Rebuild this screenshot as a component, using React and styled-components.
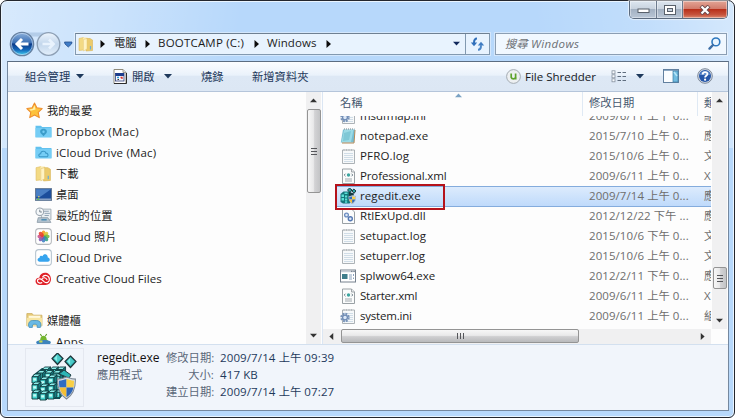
import React from 'react';
import styled, { createGlobalStyle } from 'styled-components';

const GlobalStyle = createGlobalStyle`
    * {
        box-sizing: border-box;
    }

    body {
        margin: 0;
        overflow: hidden;
        background: #fff;
        font-family: "Open Sans", "Noto Sans CJK TC", sans-serif;
        font-size: 11.5px;
        color: #1c1c1c;
    }

    svg {
        display: block;
        flex: none;
    }
`;

const Frame = styled.div`
    width: 735px;
    height: 418px;
    display: flex;
    flex-direction: column;
    padding: 0 6px 6px;
    border: 1px solid #24272e;
    border-radius: 7px 7px 6px 6px;
    box-shadow: inset 0 0 0 1px #eaf5ff;
    background:
        linear-gradient(100deg, rgba(255,255,255,.45) 0, rgba(255,255,255,.28) 110px, rgba(255,255,255,0) 240px) 0 0 / 100% 147px no-repeat,
        linear-gradient(260deg, rgba(255,255,255,.42) 0, rgba(255,255,255,.15) 90px, rgba(255,255,255,0) 200px) 0 0 / 100% 147px no-repeat,
        #b7d8fb;
`;

const TitleBar = styled.div`
    height: 32px;
    display: flex;
    justify-content: flex-end;
    align-items: flex-start;
`;

const WindowButtons = styled.div`
    display: flex;
    height: 18px;
    border: 1px solid #5c6b7e;
    border-top: 0;
    border-radius: 0 0 5px 5px;
    overflow: hidden;
    box-shadow: 0 0 1px 1px rgba(255,255,255,.55);
`;

const WindowButton = styled.span`
    width: ${p => p.$width}px;
    display: flex;
    align-items: center;
    justify-content: center;
    border-left: ${p => p.$first ? '0' : '1px solid #6d7b8e'};
    box-shadow: inset 0 0 0 1px rgba(255,255,255,.4);
    background: ${p => p.$close
        ? 'linear-gradient(#e3a596 0, #d27c6c 45%, #b8301a 50%, #c6533c 80%, #dc8a70 100%)'
        : 'linear-gradient(#dde6f0 0, #c9d3df 45%, #a3b1c2 50%, #b9c6d6 100%)'};
`;

const NavBar = styled.div`
    height: 22px;
    display: flex;
    align-items: center;
`;

const NavButtons = styled.div`
    width: 68px;
    padding-left: 2px;
    flex: none;
`;

const Address = styled.div`
    width: 415px;
    height: 22px;
    display: flex;
    align-items: center;
    padding-left: 2px;
    border: 1px solid #8299b0;
    border-top-color: #6e8092;
    background: #e8f3fe;
    box-shadow: 0 0 0 1px rgba(255,255,255,.4);
`;

const Crumb = styled.span`
    width: ${p => p.$width}px;
    flex: none;
    margin-top: -2px;
    white-space: nowrap;
    letter-spacing: ${p => p.$spacing || 0}px;
`;

const CrumbArrow = styled.span`
    width: ${p => p.$width}px;
    flex: none;
`;

const AddressDrop = styled.span`
    margin-left: auto;
    width: 18px;
    display: flex;
    justify-content: center;
`;

const Refresh = styled.span`
    width: 24px;
    height: 20px;
    display: flex;
    align-items: center;
    justify-content: center;
    border-left: 1px solid #8299b0;
`;

const Search = styled.div`
    margin-left: 5px;
    width: 232px;
    height: 22px;
    padding: 0 5px 0 9px;
    display: flex;
    align-items: center;
    justify-content: space-between;
    border: 1px solid #8b9eb3;
    background: #f1f8ff;
    box-shadow: 0 0 0 1px rgba(255,255,255,.4);
    color: #6c7075;
    font-style: italic;
    letter-spacing: .4px;
`;

const Client = styled.div`
    margin-top: 6px;
    height: 351px;
    width: 722px;
    display: flex;
    flex-direction: column;
    border: 1px solid #75889f;
    border-top-color: #5b6d82;
    background: #fdfdfd;
`;

const Toolbar = styled.div`
    height: 30px;
    flex: none;
    display: flex;
    align-items: center;
    border-bottom: 1px solid #b5c5da;
    background: linear-gradient(#fbfdff 0, #eaf2fb 45%, #dde8f5 50%, #dce7f4 100%);
    color: #1e395b;
`;

const Tool = styled.span`
    width: ${p => p.$width}px;
    margin-left: ${p => p.$start ? 17 : 0}px;
    flex: none;
    display: flex;
    align-items: center;
    white-space: nowrap;
    color: ${p => p.$dark ? '#16181c' : '#1e395b'};
`;

const Body = styled.div`
    height: 252px;
    flex: none;
    display: flex;
`;

const Sidebar = styled.div`
    width: 298px;
    padding-top: 8px;
    overflow: hidden;
`;

const SideItem = styled.div`
    height: 21px;
    margin-bottom: ${p => p.$gap ? 21 : 0}px;
    padding-left: ${p => p.$root ? 18 : 27}px;
    display: flex;
    align-items: center;
    gap: ${p => p.$root ? 4 : 4}px;
    white-space: nowrap;

    svg {
        width: 17px;
        height: 17px;
    }
`;

const SideLabel = styled.span`
    letter-spacing: ${p => p.$spacing || 0}px;
`;

const Cjk = styled.span`
    font-family: "Noto Sans CJK TC", sans-serif;
    font-size: 11.3px;
    line-height: 14px;
    letter-spacing: 0;
`;

const VScroll = styled.div`
    width: 15px;
    flex: none;
    display: flex;
    flex-direction: column;
    align-items: center;
    background: #f0f0f1;
`;

const ScrollEnd = styled.span`
    width: 17px;
    height: 17px;
    flex: none;
    display: flex;
    align-items: center;
    justify-content: center;
`;

const VThumb = styled.span`
    width: 14px;
    height: ${p => p.$height}px;
    margin-top: ${p => p.$offset}px;
    display: flex;
    align-items: center;
    justify-content: center;
    border: 1px solid #949494;
    border-radius: 2px;
    background: linear-gradient(90deg, #f7f7f7 0, #e9e9ea 45%, #d3d3d5 55%, #c3c4c6 100%);
`;

const HScroll = styled.div`
    height: 15px;
    width: 388px;
    flex: none;
    display: flex;
    align-items: center;
    background: #f0f0f1;
`;

const HThumb = styled.span`
    width: 238px;
    height: 14px;
    margin-left: 1px;
    display: flex;
    align-items: center;
    justify-content: center;
    border: 1px solid #949494;
    border-radius: 2px;
    background: linear-gradient(#f7f7f7 0, #e9e9ea 45%, #cfcfd1 55%, #b9babc 100%);
`;

const Spacer = styled.span`
    flex: 1;
`;

const Main = styled.div`
    flex: 1;
    margin-left: 1px;
    display: flex;
    flex-direction: column;
    border-left: 1px solid #dbe6f3;
`;

const MainTop = styled.div`
    height: 237px;
    display: flex;
`;

const List = styled.div`
    width: 388px;
    margin-right: 1px;
    overflow: hidden;
    position: relative;
`;

const ListHeader = styled.div`
    height: 24px;
    display: grid;
    grid-template-columns: 259px 115px 14px;
    color: #45576e;
    line-height: 22px;
`;

const HeaderCell = styled.span`
    padding-left: ${p => p.$first ? 17 : 6}px;
    overflow: hidden;
    white-space: nowrap;
    border-left: ${p => p.$first ? '0' : '1px solid #dfe9f4'};
`;

const SortMark = styled.span`
    position: absolute;
    left: 132px;
    top: 0;
`;

const Rows = styled.div`
    height: 213px;
    overflow: hidden;

    > :first-child {
        margin-top: -10px;
    }
`;

const Row = styled.div`
    height: 20px;
    display: grid;
    grid-template-columns: 247px 115px 13px;
    align-items: center;
    margin-left: 13px;
    box-shadow: ${p => p.$selected ? 'inset 0 1px #84acdd, 0 1px #84acdd' : 'none'};
    background: ${p => p.$selected ? 'linear-gradient(#deecfd, #bfdafb)' : 'none'};
`;

const FileName = styled.span`
    display: flex;
    align-items: center;
    gap: 4px;
    padding-left: 4px;
    white-space: nowrap;
    letter-spacing: ${p => p.$spacing || 0}px;

    svg {
        width: 16px;
        height: 16px;
    }
`;

const DateText = styled.span`
    padding-left: 6px;
    color: #6d6d6d;
    white-space: nowrap;
    letter-spacing: .07px;
`;

const TypeText = styled.span`
    padding-left: 6px;
    width: 13px;
    overflow: hidden;
    color: #6d6d6d;
    white-space: nowrap;
`;

const Highlight = styled.span`
    position: absolute;
    left: 12px;
    top: 92px;
    width: 110px;
    height: 26px;
    border: 2px solid #b5121b;
`;

const Details = styled.div`
    flex: 1;
    display: flex;
    border-top: 1px solid #d3e0ef;
    background: #f1f5fb;
    line-height: 17px;
`;

const Preview = styled.div`
    width: 59px;
    height: 59px;
    margin: 3px 0 0 17px;
    display: flex;
    align-items: center;
    justify-content: center;
    border: 1px solid #e4e8f0;
`;

const DetailName = styled.div`
    margin: 4px 0 0 13px;
    width: 69px;
    white-space: nowrap;
    color: #5a6779;

    b {
        display: block;
        font-weight: 400;
        font-size: 12px;
        color: #111;
    }
`;

const DetailGrid = styled.div`
    margin-top: 4px;
    display: grid;
    grid-template-columns: 48px auto;
    grid-template-rows: repeat(3, 17px);
    column-gap: 6px;
    color: #1e395b;
    white-space: nowrap;
    align-content: start;
    letter-spacing: .12px;
`;

const DetailKey = styled.span`
    text-align: right;
    color: #5a6779;
`;

// Chinese runs are set a little smaller than the Latin ones
const Mixed = ({ children }) => children
    .split(/([\u4e00-\u9fff]+)/)
    .map((part, i) => i % 2 ? <Cjk key={i}>{part}</Cjk> : part);

const Triangle = ({ dir = 'down', size = 7, color = '#1e395b' }) => {
    const turn = { down: 0, left: 90, up: 180, right: 270 }[dir];
    return (
        <svg width={size} height={size} viewBox="0 0 8 8">
            <path d="M0 2h8L4 6.4z" fill={color} transform={`rotate(${turn} 4 4)`} />
        </svg>
    );
};

const CrumbTriangle = () => (
    <svg width="6" height="8" viewBox="0 0 6 8">
        <path d="M.5 0l4.500 4L.5 8z" fill="#0c0c0c" />
    </svg>
);

const Grip = ({ vertical }) => (
    <svg width="8" height="8" viewBox="0 0 8 8">
        <path d={vertical ? 'M1 1.5h6M1 4.5h6M1 7.5h6' : 'M1.5 1v6M4.5 1v6M7.5 1v6'} stroke="#55565a" />
    </svg>
);

const BackForward = () => (
    <svg width="66" height="26" viewBox="0 0 66 26">
        <defs>
            <linearGradient id="back" x1="0" y1="0" x2="0" y2="1">
                <stop offset="0" stopColor="#8fb2dc" />
                <stop offset=".45" stopColor="#3a6fb4" />
                <stop offset=".5" stopColor="#0c3b88" />
                <stop offset=".75" stopColor="#1467b9" />
                <stop offset="1" stopColor="#48dcf7" />
            </linearGradient>
            <linearGradient id="forward" x1="0" y1="0" x2="0" y2="1">
                <stop offset="0" stopColor="#edf5fd" />
                <stop offset=".5" stopColor="#c3d7ec" />
                <stop offset="1" stopColor="#e3effb" />
            </linearGradient>
        </defs>
        <path d="M13 1.5h27l-3 4H18z" fill="#a6c2df" opacity=".7" />
        <circle cx="13" cy="13" r="11.7" fill="url(#back)" stroke="#68819f" strokeWidth="1.2" />
        <circle cx="13" cy="13" r="10.6" fill="none" stroke="#c2d8ef" strokeWidth=".9" opacity=".8" />
        <path d="M19.5 13H9M13 8l-5 5 5 5" fill="none" stroke="#fff" strokeWidth="3" />
        <circle cx="39.5" cy="13" r="11.3" fill="url(#forward)" stroke="#8d9fb4" strokeWidth="1.3" />
        <path d="M33.5 13H44M40 8.5l4.6 4.5-4.6 4.5" fill="none" stroke="#e9f3fd" strokeWidth="2.6" />
        <path d="M55.5 11h7.5l-.5 2-3.2 3-3.3-3z" fill="#3e7cc7" stroke="#244f8e" strokeWidth=".8" />
    </svg>
);

const FolderIcon = () => (
    <svg width="16" height="16" viewBox="0 0 16 16">
        <path d="M1 2.500L5.500 1.500V14L1 14.500z" fill="#f3da84" stroke="#e0bd62" strokeWidth=".6" />
        <path d="M5 1.500h4.500v12L5 14.500z" fill="#fbeaae" />
        <path d="M8.500 2.500H12L14.500 4v10.500L8 15z" fill="#eccb6c" stroke="#d8b455" strokeWidth=".6" />
        <path d="M5.500 3.500L9 2.500V13l-3.500 2z" fill="#fff3c4" stroke="#e3c470" strokeWidth=".5" />
        <path d="M12.500 10v3.500" stroke="#6fb0d3" strokeWidth="1.200" />
    </svg>
);

const RefreshIcon = () => (
    <svg width="15" height="14" viewBox="0 0 15 14">
        <path d="M7 1.500C5 1.500 4 3 4 6" fill="none" stroke="#2f6fba" strokeWidth="2" />
        <path d="M.8 5.500h6.400L4 9.200z" fill="#2f6fba" />
        <path d="M8 12.800c2 0 3-1.500 3-4.500" fill="none" stroke="#4a86c8" strokeWidth="2" />
        <path d="M7.800 8.500h6.400L11 4.800z" fill="#3f7cc2" />
    </svg>
);

const SearchIcon = () => (
    <svg width="13" height="13" viewBox="0 0 13 13">
        <circle cx="7.900" cy="4.900" r="3.900" fill="#e9f5ff" stroke="#2d78bf" strokeWidth="1.600" />
        <path d="M5 8L1.500 11.600" stroke="#3d6ea6" strokeWidth="2.400" strokeLinecap="round" />
    </svg>
);

const OpenIcon = () => (
    <svg width="14" height="15" viewBox="0 0 14 15">
        <path d="M1 .5h9l3 3v11H1z" fill="#fff" stroke="#8f8a7b" />
        <path d="M10 .5v3h3" fill="#ddd" stroke="#8f8a7b" strokeWidth=".8" />
        <rect x="2.500" y="4.500" width="8.500" height="7.500" fill="#f5f7ff" stroke="#2d3c78" strokeWidth=".8" />
        <rect x="2.500" y="4" width="8.500" height="3" fill="#1d3d8c" />
        <path d="M4 8.500h2" stroke="#2c9cd8" strokeWidth="1.500" />
        <path d="M7.500 8.500h1.500v1.500" fill="none" stroke="#d9352b" strokeWidth="1.300" />
        <path d="M4.500 10.500h1.500" stroke="#333" strokeWidth="1" />
        <path d="M1 14.500h12.500V4" fill="none" stroke="#2b2b2b" />
    </svg>
);

const ShredderIcon = () => (
    <svg width="15" height="15" viewBox="0 0 15 15">
        <circle cx="7.500" cy="7.500" r="6.900" fill="#edf0f2" stroke="#a3abb2" />
        <path d="M5.200 4.400v4a2.300 2 0 0 0 4.400 0v-4M9.700 8v2.500" fill="none" stroke="#5ea32d" strokeWidth="1.700" />
    </svg>
);

const ViewIcon = () => (
    <svg width="16" height="13" viewBox="0 0 16 13">
        {[0, 4, 8].map(y => (
            <g key={y}>
                <rect x="1" y={y + .8} width="3" height="3" fill="#f7fafd" stroke="#8792a0" strokeWidth=".8" />
                <path d={`M6.500 ${y + 2.500}h3.500M11.500 ${y + 2.500}h3.500`} stroke="#5f6d7e" />
            </g>
        ))}
    </svg>
);

const PaneIcon = () => (
    <svg width="16" height="14" viewBox="0 0 16 14">
        <rect x=".5" y=".5" width="15" height="13" fill="#fbfdff" stroke="#62809f" />
        <path d="M1 1.500h14" stroke="#8ea9c4" />
        <rect x="10" y="2" width="5" height="11" fill="#72bce0" stroke="#3e7ca4" strokeWidth=".7" />
        <path d="M11 3l3 4" stroke="#b5e4f6" strokeWidth="1.500" />
    </svg>
);

const HelpIcon = () => (
    <svg width="16" height="16" viewBox="0 0 16 16">
        <circle cx="8" cy="8" r="7.300" fill="#d4dce8" stroke="#7d8898" />
        <circle cx="8" cy="8" r="6" fill="#2456a8" />
        <path d="M3 7a5 4 0 0 1 10 0z" fill="#5f8dce" />
        <path d="M5.700 6.400c0-3 4.700-3 4.700-.3 0 1.700-2.300 1.700-2.300 3.300" fill="none" stroke="#fff" strokeWidth="1.800" />
        <circle cx="8.100" cy="11.700" r="1.100" fill="#fff" />
    </svg>
);

const StarIcon = () => (
    <svg viewBox="0 0 16 16">
        <path d="M8 1l2.200 4.500 5 .7-3.700 3.500 1 5L8 12.300 3.500 14.700l1-5L.8 6.200l5-.7z" fill="#fdc23c" stroke="#ee8d2c" strokeLinejoin="round" />
        <path d="M8 3l1 4-4.500 1.200L3 7l3.500-.7z" fill="#fff0a8" />
    </svg>
);

const MacFolder = ({ cloud }) => (
    <svg viewBox="0 0 16 16">
        <path d="M.5 2.500h5l1.300 1.200h8.700V13.500H.5z" fill="#62c1ee" />
        <path d="M.5 4.700h15v8.800H.5z" fill="#75cdf5" />
        {cloud
            ? <path d="M4.500 12c-2-1-.5-3 .8-2.800.3-3 4.400-2.900 4.900-.6 2-.2 2.800 2.400 1.200 3.400z" fill="none" stroke="#3a97c6" />
            : <path d="M8 12.500L5.200 9.300C4 7 6 5.500 8 5.500s4 1.500 2.800 3.800z" fill="#3a9cc9" />}
        {!cloud && <circle cx="8" cy="8.200" r="1.100" fill="#75cdf5" />}
    </svg>
);

const DesktopIcon = () => (
    <svg viewBox="0 0 16 16">
        <rect x=".5" y="2.500" width="15" height="11" fill="#1b4d9b" stroke="#657995" />
        <path d="M1 3h14L5 10H1z" fill="#4a7fc4" />
        <path d="M1 12.500h14" stroke="#88a1c4" strokeWidth="1.500" />
        <path d="M2 12.500h2" stroke="#61bf4e" strokeWidth="1.500" />
        <rect x="3" y="9.500" width="1.200" height="1.200" fill="#ffd84f" />
    </svg>
);

const RecentIcon = () => (
    <svg viewBox="0 0 16 16">
        <path d="M6 2h9v10H6z" fill="#e9eef2" stroke="#9aa5ae" strokeWidth=".8" />
        <path d="M8 4h5M9 6h5M9 8h4" stroke="#8fa3b3" strokeWidth=".9" />
        <path d="M3 10h9l3 4.500H2z" fill="#b5c4cf" stroke="#8796a2" strokeWidth=".7" />
        <path d="M6 12h5" stroke="#4e8eb5" strokeWidth="1.500" />
        <circle cx="4.500" cy="4.500" r="3.600" fill="#f5f8fa" stroke="#9ba6b0" />
        <path d="M4.500 2.500v2.200h2" fill="none" stroke="#66737e" strokeWidth=".8" />
    </svg>
);

const petals = ['#f79a1e', '#d8c93a', '#75b843', '#2fa083', '#3d7fc4', '#7a5bb0', '#c9518c', '#e5402c'];

const PhotosIcon = () => (
    <svg viewBox="0 0 16 16">
        <rect x=".6" y=".6" width="14.800" height="14.800" rx="3" fill="#fff" stroke="#b5b9bd" />
        {petals.map((color, i) => (
            <ellipse key={color} cx="8" cy="5.100" rx="1.800" ry="2.800" fill={color} opacity=".88" transform={`rotate(${i * 45} 8 8)`} />
        ))}
    </svg>
);

const CloudIcon = () => (
    <svg viewBox="0 0 16 16">
        <rect x=".6" y=".6" width="14.800" height="14.800" rx="3" fill="#fff" stroke="#b5c3ce" />
        <path d="M4.500 12C1.500 11.500 2 8.500 4.300 8.300c-.2-2 2-2.500 2.700-1.500C8 3.600 12.300 4.500 12 8c2.700.5 2.400 3.800 0 4z" fill="#36a4ee" />
    </svg>
);

const CreativeIcon = () => (
    <svg viewBox="0 0 16 16">
        <path d="M4.500 14C-1 14-.5 7 4 7.200 5 1 14.500 1 15 8.200c.2 3.500-2 5.800-5 5.800z" fill="#e02128" />
        <path d="M6.800 11.800c-1.800 1-4.500.4-4.500-1.600 0-2.200 3-2.400 4.300-1l2.200 2c2.400 1.900 5-.2 4.700-2.900-.4-3.600-5-4.200-6.500-1.500" fill="none" stroke="#fff" strokeWidth="1.100" />
        <path d="M6.500 8.500c1.500-2 3.500-1.400 5 .8" fill="none" stroke="#fff" strokeWidth="1" />
    </svg>
);

const LibraryIcon = () => (
    <svg viewBox="0 0 16 16">
        <path d="M.8 1.500h5L7 3h8v10H.8z" fill="#e9cd79" stroke="#c9a95a" strokeWidth=".7" />
        <path d="M2.500 3.500h11v4h-11z" fill="#fff8dc" />
        <path d="M.8 5.500h14.400V13H.8z" fill="#f7e5a2" />
        <path d="M3 14.500c-1.500-3 0-6.500 3-6.500h4c3.500 0 5 3.500 3.500 6.500h-3c.3-2.500-.5-3-2.300-3s-2.500.7-2.200 3z" fill="#69b9e4" stroke="#3c8ab9" strokeWidth=".7" />
    </svg>
);

const AppsIcon = () => (
    <svg viewBox="0 0 16 16">
        <path d="M5 6c0-4.500 6-4.500 6 0l2 2H3z" fill="#74b72e" />
        <path d="M5 1l1.300 2M11 1L9.700 3" stroke="#5c9a26" />
        <path d="M1 8.500c2-2.500 12-2.500 14 0l-2 5H3z" fill="#3e84bd" />
        <path d="M4 7h3v2H4z" fill="#c6da4c" />
    </svg>
);

const LogIcon = ({ children }) => (
    <svg viewBox="0 0 16 16">
        <path d="M2.500 2h12v13.500h-12z" fill="#f7f9fa" stroke="#a3a9ae" strokeWidth=".9" />
        <path d="M4 1v2M6.500 1v2M9 1v2M11.500 1v2" stroke="#b5babd" strokeWidth=".9" />
        <path d="M4 5.500h9M4 7.500h9M4 9.500h9M4 11.500h9M4 13.500h9" stroke="#cbd9e4" strokeWidth=".9" />
        {children}
    </svg>
);

const IniIcon = () => (
    <LogIcon>
        <circle cx="5" cy="9.500" r="3.700" fill="none" stroke="#7893b9" strokeWidth="2" strokeDasharray="1.900 1" />
        <circle cx="5" cy="9.500" r="2.400" fill="#dce8f7" stroke="#6f8cb5" strokeWidth="1.300" />
    </LogIcon>
);

const NotepadIcon = () => (
    <svg viewBox="0 0 16 16">
        <path d="M3 1.500h12l-1 13H.800z" fill="#76bed2" />
        <path d="M4 2h9.500L11 14H1.500z" fill="#9bdae5" />
        <path d="M4 5l7-2-2 9-6 1z" fill="#6dbdcc" opacity=".6" />
        <path d="M15 2l-1 13H2" fill="none" stroke="#b28958" strokeWidth="1" />
        <path d="M4 1h10.500" stroke="#73838b" strokeDasharray="1 1" />
    </svg>
);

const XmlIcon = () => (
    <svg viewBox="0 0 16 16">
        <path d="M2.500 1h9l3 3v11.500h-12z" fill="#fbfcfc" stroke="#8f969b" strokeWidth=".9" />
        <path d="M11.500 1v3h3" fill="#e6e9eb" stroke="#8f969b" strokeWidth=".8" />
        <circle cx="8.500" cy="7" r="1.700" fill="#3ca5a0" />
        <path d="M5.500 5.700L4.200 7l1.300 1.300M11.500 5.700L12.800 7l-1.300 1.300" fill="none" stroke="#647680" strokeWidth=".9" />
        <path d="M5 11h7M5 13h7" stroke="#a0a8ad" />
    </svg>
);

const DllIcon = () => (
    <svg viewBox="0 0 16 16">
        <path d="M2.500 1h9l3 3v11.500h-12z" fill="#fbfcfc" stroke="#8f969b" strokeWidth=".9" />
        <circle cx="6.500" cy="7" r="1.900" fill="#dfe9f6" stroke="#6c8dc0" strokeWidth="1.300" />
        <circle cx="10.300" cy="10.800" r="2" fill="#dfe9f6" stroke="#5578b3" strokeWidth="1.400" />
    </svg>
);

const ExeIcon = () => (
    <svg viewBox="0 0 16 16">
        <rect x=".5" y="2" width="15" height="12" fill="#fff" stroke="#76818e" />
        <path d="M1 3.500h14" stroke="#c7ced7" strokeWidth="1.500" />
        <path d="M11 3.300h4" stroke="#64717f" strokeDasharray="1 .6" />
        <rect x="2" y="6" width="5.500" height="5" fill="#3e7d8b" />
        <path d="M9 7h3M9 9h3M9 11h3M13.500 6v2M13.500 9.500v1.500" stroke="#8aa2bd" />
    </svg>
);

const Cube = ({ x, y, s = 7 }) => (
    <g transform={`translate(${x} ${y}) scale(${s / 7})`} stroke="#123f44" strokeWidth=".8">
        <path d="M0 2.200h5v5.300H0z" fill="#43d5d0" />
        <path d="M0 2.200L2.500 0h5L5 2.200z" fill="#8deeea" />
        <path d="M5 2.200L7.500 0v5.300L5 7.500z" fill="#157c80" />
        <path d="M1 3.500h2.500v2H1z" fill="#c5fbf5" stroke="none" />
    </g>
);

const Shield = ({ transform }) => (
    <g transform={transform}>
        <path d="M0 2c4 0 6-1 9-2 3 1 5 2 9 2 0 9-2 15-9 19C2 17 0 11 0 2z" fill="#d9dfe6" stroke="#7c8894" />
        <path d="M9 2v8H2C1.600 8 1.500 5 1.500 3.500 4.500 3.400 6.500 2.800 9 2z" fill="#2e6dc2" />
        <path d="M9 2c2.500.800 4.500 1.400 7.500 1.500 0 1.500-.100 4.500-.500 6.500H9z" fill="#f8cf45" />
        <path d="M2 10h7v9.300C5 17 3 14 2 10z" fill="#f4bf34" />
        <path d="M16 10H9v9.300C13 17 15 14 16 10z" fill="#2c64b6" />
    </g>
);

// floating octahedron above the cube stack
const Gem = ({ x, y }) => (
    <g transform={`translate(${x} ${y})`}>
        <path d="M5.500 0L11 5.500 5.500 11.500 0 5.500z" fill="#2fb5b5" stroke="#1f3439" strokeWidth="1.200" />
        <path d="M5.500 1.500L2 5.300l3.500 4z" fill="#86ece6" />
        <path d="M5.500 1.500l3.500 3.800-3.500 4z" fill="#4bcac8" />
    </g>
);

const RegeditLarge = () => (
    <svg width="48" height="48" viewBox="0 0 48 48">
        <path d="M2 22l9-7h19l4 6-5 25H3z" fill="#0c4e53" />
        {[[11, 14], [19, 14], [26, 14], [6, 17.500], [14, 17.500], [22, 17.500]].map(([x, y]) => <Cube key={`${x}-${y}`} x={x} y={y} s={8} />)}
        {[[24, 21], [24, 29], [24, 37]].map(([x, y]) => <Cube key={y} x={x} y={y} s={7} />)}
        {[[1, 21], [9, 24], [17, 22], [1, 29], [9, 31], [17, 30], [1, 37], [9, 38], [17, 37]].map(([x, y]) => <Cube key={`${x}-${y}`} x={x} y={y} s={8.400} />)}
        <Gem x={21} y={0} />
        <Gem x={34} y={3} />
        <path d="M28 21l5-4 7 5-2 3z" fill="#2cb4b5" stroke="#1d3d43" />
        <Shield transform="translate(26.500 24) scale(1 1.050)" />
    </svg>
);

const RegeditSmall = () => (
    <svg viewBox="0 0 16 16">
        <path d="M.5 6l3-2.500h6l2 2v8l-2 2H3L.5 14z" fill="#15767a" />
        <path d="M1.500 6.500h2.500v2.500H1.500zM1.500 10h2.500v2.500H1.500zM5 7.500h2.200v2H5zM5 10.500h2.200v2H5zM5 13.200h2.200v1.500H5zM4.500 4.600h3v1.400h-3z" fill="#5ce0d8" />
        <path d="M9.500 0l2.500 2-2 2.500L7.500 2zM13.800 1L16 3l-2 2.300L12 3z" fill="#2aa6a5" stroke="#12292c" strokeWidth=".9" />
        <path d="M9 4l5 1.500-.5 2L9 8z" fill="#163b3e" />
        <Shield transform="translate(8.600 7.500) scale(.4)" />
    </svg>
);

const sideItems = [
    { label: '我的最愛', Icon: StarIcon, root: true },
    { label: 'Dropbox (Mac)', Icon: MacFolder, spacing: .3 },
    { label: 'iCloud Drive (Mac)', Icon: () => <MacFolder cloud />, spacing: .17 },
    { label: '下載', Icon: FolderIcon },
    { label: '桌面', Icon: DesktopIcon },
    { label: '最近的位置', Icon: RecentIcon },
    { label: 'iCloud 照片', Icon: PhotosIcon, spacing: .15 },
    { label: 'iCloud Drive', Icon: CloudIcon, spacing: .08 },
    { label: 'Creative Cloud Files', Icon: CreativeIcon, gap: true, spacing: .05 },
    { label: '媒體櫃', Icon: LibraryIcon, root: true },
    { label: 'Apps', Icon: AppsIcon, spacing: .2 },
];

const files = [
    { name: 'msdfmap.ini', date: '2009/6/11 上午 0...', type: '組態', Icon: IniIcon, spacing: -.1 },
    { name: 'notepad.exe', date: '2015/7/10 上午 0...', type: '應用', Icon: NotepadIcon, spacing: .12 },
    { name: 'PFRO.log', date: '2015/10/6 上午 0...', type: '文字', Icon: LogIcon, spacing: .15 },
    { name: 'Professional.xml', date: '2009/6/11 上午 0...', type: 'XML', Icon: XmlIcon, spacing: -.13 },
    { name: 'regedit.exe', date: '2009/7/14 上午 0...', type: '應用', Icon: RegeditSmall, selected: true, spacing: .08 },
    { name: 'RtlExUpd.dll', date: '2012/12/22 下午 ...', type: '應用', Icon: DllIcon, spacing: .08 },
    { name: 'setupact.log', date: '2015/10/6 下午 0...', type: '文字', Icon: LogIcon, spacing: .06 },
    { name: 'setuperr.log', date: '2015/10/6 上午 0...', type: '文字', Icon: LogIcon },
    { name: 'splwow64.exe', date: '2012/2/11 下午 0...', type: '應用', Icon: ExeIcon },
    { name: 'Starter.xml', date: '2009/6/11 上午 0...', type: 'XML', Icon: XmlIcon, spacing: -.2 },
    { name: 'system.ini', date: '2009/6/11 上午 0...', type: '組態', Icon: IniIcon, spacing: -.2 },
];

export default class App extends React.Component {

    renderNav() {
        return (
            <NavBar>
                <NavButtons><BackForward /></NavButtons>
                <Address>
                    <CrumbArrow $width={22}><FolderIcon /></CrumbArrow>
                    <CrumbArrow $width={14}><CrumbTriangle /></CrumbArrow>
                    <Crumb $width={31}><Mixed>電腦</Mixed></Crumb>
                    <CrumbArrow $width={13}><CrumbTriangle /></CrumbArrow>
                    <Crumb $width={96} $spacing={.2}>BOOTCAMP (C:)</Crumb>
                    <CrumbArrow $width={13}><CrumbTriangle /></CrumbArrow>
                    <Crumb $width={59} $spacing={.1}>Windows</Crumb>
                    <CrumbArrow $width={13}><CrumbTriangle /></CrumbArrow>
                    <AddressDrop><Triangle color="#10285c" /></AddressDrop>
                    <Refresh><RefreshIcon /></Refresh>
                </Address>
                <Search>
                    <span><Mixed>搜尋 Windows</Mixed></span>
                    <SearchIcon />
                </Search>
            </NavBar>
        );
    }

    renderToolbar() {
        return (
            <Toolbar>
                <Tool $width={51} $start><Mixed>組合管理</Mixed></Tool>
                <Tool $width={37}><Triangle size={8} /></Tool>
                <Tool $width={19}><OpenIcon /></Tool>
                <Tool $width={32}><Mixed>開啟</Mixed></Tool>
                <Tool $width={37}><Triangle size={8} /></Tool>
                <Tool $width={51}><Mixed>燒錄</Mixed></Tool>
                <Tool $width={254}><Mixed>新增資料夾</Mixed></Tool>
                <Tool $width={19}><ShredderIcon /></Tool>
                <Tool $width={86} $dark>File Shredder</Tool>
                <Tool $width={25}><ViewIcon /></Tool>
                <Tool $width={27}><Triangle size={8} /></Tool>
                <Tool $width={34}><PaneIcon /></Tool>
                <Tool $width={16}><HelpIcon /></Tool>
            </Toolbar>
        );
    }

    render() {
        return (
            <>
                <GlobalStyle />
                <Frame>
                    <TitleBar>
                        <WindowButtons>
                            <WindowButton $width={26} $first>
                                <svg width="13" height="8" viewBox="0 0 13 8"><rect x="1" y="3" width="11" height="3.500" fill="#fff" stroke="#59616b" /></svg>
                            </WindowButton>
                            <WindowButton $width={26}>
                                <svg width="12" height="10" viewBox="0 0 12 10">
                                    <rect x="2" y="2" width="8" height="6" fill="none" stroke="#fff" strokeWidth="2.400" />
                                    <rect x=".500" y=".500" width="11" height="9" fill="none" stroke="#59616b" />
                                    <rect x="3.500" y="3.500" width="5" height="3" fill="#c7d2df" stroke="#59616b" />
                                </svg>
                            </WindowButton>
                            <WindowButton $width={45} $close>
                                <svg width="12" height="10" viewBox="0 0 12 10">
                                    <path d="M2 1l8 8M10 1L2 9" stroke="#6a4a4d" strokeWidth="4" />
                                    <path d="M2.500 1.500l7 7M9.500 1.500l-7 7" stroke="#fff" strokeWidth="2.200" />
                                </svg>
                            </WindowButton>
                        </WindowButtons>
                    </TitleBar>
                    {this.renderNav()}
                    <Client>
                        {this.renderToolbar()}
                        <Body>
                            <Sidebar>
                                {sideItems.map(({ label, Icon, root, gap, spacing }) => (
                                    <SideItem key={label} $root={root} $gap={gap}>
                                        <Icon />
                                        <SideLabel $spacing={spacing}><Mixed>{label}</Mixed></SideLabel>
                                    </SideItem>
                                ))}
                            </Sidebar>
                            <VScroll>
                                <ScrollEnd><Triangle dir="up" color="#333" /></ScrollEnd>
                                <VThumb $height={84} $offset={0}><Grip vertical /></VThumb>
                                <Spacer />
                                <ScrollEnd><Triangle color="#333" /></ScrollEnd>
                            </VScroll>
                            <Main>
                                <MainTop>
                                    <List>
                                        <ListHeader>
                                            <HeaderCell $first><Mixed>名稱</Mixed></HeaderCell>
                                            <HeaderCell><Mixed>修改日期</Mixed></HeaderCell>
                                            <HeaderCell><Mixed>類型</Mixed></HeaderCell>
                                        </ListHeader>
                                        <Rows>
                                            {files.map(({ name, date, type, Icon, selected, spacing }) => (
                                                <Row key={name} $selected={selected}>
                                                    <FileName $spacing={spacing}><Icon />{name}</FileName>
                                                    <DateText><Mixed>{date}</Mixed></DateText>
                                                    <TypeText><Mixed>{type}</Mixed></TypeText>
                                                </Row>
                                            ))}
                                        </Rows>
                                        <SortMark><Triangle dir="up" color="#7ba3c4" /></SortMark>
                                        <Highlight />
                                    </List>
                                    <VScroll>
                                        <ScrollEnd><Triangle dir="up" color="#333" /></ScrollEnd>
                                        <VThumb $height={22} $offset={158}><Grip vertical /></VThumb>
                                        <Spacer />
                                        <ScrollEnd><Triangle color="#333" /></ScrollEnd>
                                    </VScroll>
                                </MainTop>
                                <HScroll>
                                    <ScrollEnd><Triangle dir="left" color="#333" /></ScrollEnd>
                                    <HThumb><Grip /></HThumb>
                                    <Spacer />
                                    <ScrollEnd><Triangle dir="right" color="#333" /></ScrollEnd>
                                </HScroll>
                            </Main>
                        </Body>
                        <Details>
                            <Preview><RegeditLarge /></Preview>
                            <DetailName>
                                <b>regedit.exe</b>
                                <Mixed>應用程式</Mixed>
                            </DetailName>
                            <DetailGrid>
                                <DetailKey><Mixed>修改日期:</Mixed></DetailKey>
                                <span><Mixed>2009/7/14 上午 09:39</Mixed></span>
                                <DetailKey><Mixed>大小:</Mixed></DetailKey>
                                <span>417 KB</span>
                                <DetailKey><Mixed>建立日期:</Mixed></DetailKey>
                                <span><Mixed>2009/7/14 上午 07:27</Mixed></span>
                            </DetailGrid>
                        </Details>
                    </Client>
                </Frame>
            </>
        );
    }
}
